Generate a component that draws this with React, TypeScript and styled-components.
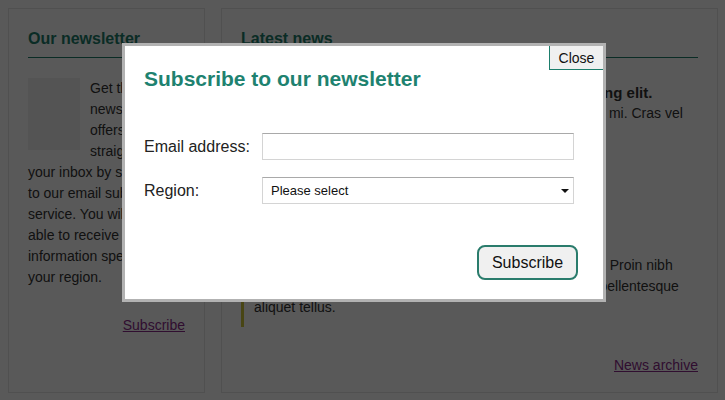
import React from "react";
import styled, { createGlobalStyle } from "styled-components";

const GlobalStyle = createGlobalStyle`
  html, body {
    margin: 0;
    padding: 0;
    overflow: hidden;
    background: #ffffff;
  }
  body {
    font-family: "Liberation Sans", Arial, sans-serif;
    color: #333333;
  }
  * {
    box-sizing: border-box;
  }
`;

const teal = "#1d7e6c";

const Page = styled.div`
  display: grid;
  grid-template-columns: 197px 497px;
  column-gap: 16px;
  padding: 8px;
  height: 400px;
`;

const Panel = styled.section`
  display: flex;
  flex-direction: column;
  height: 385px;
  padding: 19px;
  border: 1px solid #e4e4e4;
  background: #ffffff;
`;

const PanelTitle = styled.h2`
  margin: 0 0 20px 0;
  padding-bottom: 8px;
  border-bottom: 1px solid ${teal};
  color: ${teal};
  font-size: 16px;
  line-height: 21px;
  font-weight: bold;
`;

const Thumb = styled.div`
  float: left;
  width: 52px;
  height: 72px;
  margin: 0 10px 10px 0;
  background: #efefef;
`;

const BodyText = styled.p`
  margin: 0;
  font-size: 14px;
  line-height: 21px;
`;

const LinkRow = styled.p<{ $gap: number }>`
  margin: ${(p) => p.$gap}px 0 0 0;
  text-align: right;
  font-size: 14px;
  line-height: 21px;
`;

const Link = styled.a`
  color: #8a2a8a;
  text-decoration: underline;
`;

const NewsList = styled.div`
  display: flex;
  flex-direction: column;
  gap: 55px;
`;

const NewsItem = styled.article<{ $accent?: boolean }>`
  padding: 4px 0 9px 10px;
  border-left: 3px solid ${(p) => (p.$accent ? "#cfc63a" : "transparent")};
`;

const NewsTitle = styled.h3`
  margin: 0;
  font-size: 15px;
  line-height: 21px;
  font-weight: bold;
`;

const Meta = styled.p`
  margin: 0;
  font-size: 12px;
  line-height: 21px;
  color: #888888;
`;

const Backdrop = styled.div`
  position: fixed;
  inset: 0;
  background: rgba(0, 0, 0, 0.65);
`;

const Dialog = styled.div`
  position: fixed;
  top: 43px;
  left: 122px;
  width: 484px;
  padding: 21px 25px 19px 19px;
  border: 3px solid #b2b2b2;
  background: #ffffff;
`;

const CloseButton = styled.button`
  position: absolute;
  top: 0;
  right: 0;
  width: 54px;
  height: 24px;
  padding: 0;
  border: none;
  border-left: 1px solid ${teal};
  border-bottom: 1px solid ${teal};
  background: #f0f0f0;
  color: #111111;
  font-family: "Liberation Sans", Arial, sans-serif;
  font-size: 14px;
`;

const DialogTitle = styled.h1`
  margin: 0 0 42px 0;
  color: #1e8270;
  font-size: 21px;
  line-height: 24px;
  font-weight: bold;
`;

const Form = styled.form`
  display: flex;
  flex-direction: column;
  gap: 17px;
`;

const Field = styled.div`
  display: flex;
  align-items: center;
`;

const Label = styled.label`
  width: 118px;
  font-size: 16px;
  color: #222222;
`;

const TextInput = styled.input`
  width: 312px;
  height: 27px;
  border: 1px solid #d4d4d4;
  border-top-color: #a9a9a9;
  background: #ffffff;
  font-family: "Liberation Sans", Arial, sans-serif;
  font-size: 13px;
`;

const SelectWrap = styled.div`
  position: relative;
  width: 312px;
  height: 27px;
`;

const Select = styled.select`
  appearance: none;
  width: 100%;
  height: 100%;
  padding: 0 20px 0 8px;
  border: 1px solid #d4d4d4;
  border-top-color: #a9a9a9;
  border-radius: 0;
  background: #ffffff;
  color: #111111;
  font-family: "Liberation Sans", Arial, sans-serif;
  font-size: 13px;
`;

const Caret = styled.span`
  position: absolute;
  top: 12px;
  right: 5px;
  width: 0;
  height: 0;
  border-left: 4px solid transparent;
  border-right: 4px solid transparent;
  border-top: 4px solid #111111;
  pointer-events: none;
`;

const Actions = styled.div`
  display: flex;
  justify-content: flex-end;
  margin-top: 24px;
`;

const SubmitButton = styled.button`
  width: 101px;
  height: 35px;
  border: 2px solid #2a7c6c;
  border-radius: 8px;
  background: #f0f0f0;
  color: #111111;
  font-family: "Liberation Sans", Arial, sans-serif;
  font-size: 16px;
`;

export default function App() {
  return (
    <>
      <GlobalStyle />
      <Page>
        <Panel>
          <PanelTitle>Our newsletter</PanelTitle>
          <div>
            <Thumb />
            <BodyText>
              Get the latest news and offers sent straight into your inbox by
              signing up to our email subscription service. You will then be
              able to receive information specific to your region.
            </BodyText>
          </div>
          <LinkRow $gap={27}>
            <Link href="#">Subscribe</Link>
          </LinkRow>
        </Panel>
        <Panel>
          <PanelTitle>Latest news</PanelTitle>
          <NewsList>
            <NewsItem>
              <NewsTitle>
                Lorem ipsum dolor sit amet, consectetur adipiscing elit.
              </NewsTitle>
              <BodyText>
                Donec dapibus nulla facilisi. Aenean sodales scelerisque mi.
                Cras vel dictum lorem.
              </BodyText>
              <Meta>Posted on 12 March 2013</Meta>
            </NewsItem>
            <NewsItem $accent>
              <NewsTitle>Sed posuere consectetur est at lobortis.</NewsTitle>
              <BodyText>
                Maecenas faucibus pharetra interdum, sed posuere erat. Proin
                nibh vitae lacus vel dictum eleifend, sed in tempus ac metus
                pellentesque aliquet tellus.
              </BodyText>
            </NewsItem>
          </NewsList>
          <LinkRow $gap={28}>
            <Link href="#">News archive</Link>
          </LinkRow>
        </Panel>
      </Page>
      <Backdrop />
      <Dialog role="dialog">
        <CloseButton type="button">Close</CloseButton>
        <DialogTitle>Subscribe to our newsletter</DialogTitle>
        <Form onSubmit={(e) => e.preventDefault()}>
          <Field>
            <Label htmlFor="email">Email address:</Label>
            <TextInput id="email" type="text" />
          </Field>
          <Field>
            <Label htmlFor="region">Region:</Label>
            <SelectWrap>
              <Select id="region" defaultValue="">
                <option value="">Please select</option>
                <option value="north">North</option>
                <option value="south">South</option>
              </Select>
              <Caret />
            </SelectWrap>
          </Field>
          <Actions>
            <SubmitButton type="submit">Subscribe</SubmitButton>
          </Actions>
        </Form>
      </Dialog>
    </>
  );
}
